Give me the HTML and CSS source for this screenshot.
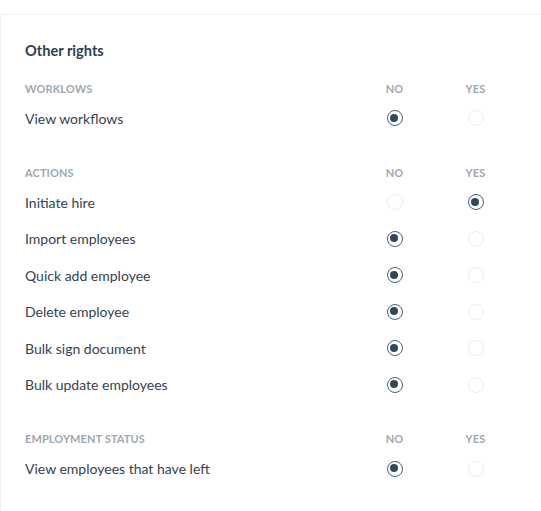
FILE: index.html
```html
<!DOCTYPE html>
<html lang="en">
<head>
  <meta charset="utf-8">
  <title>Other rights</title>
  <link rel="stylesheet" href="styles.css">
</head>
<body>
  <div class="page">
    <div class="card">
      <h2 class="title">Other rights</h2>

      <!-- workflows -->
      <div class="section">
        <div class="row head">
          <span class="label">Worklows</span>
          <span class="col">No</span>
          <span class="col">Yes</span>
        </div>
        <div class="row">
          <span class="label">View workflows</span>
          <span class="col"><span class="radio on"></span></span>
          <span class="col"><span class="radio"></span></span>
        </div>
      </div>

      <!-- actions -->
      <div class="section">
        <div class="row head">
          <span class="label">Actions</span>
          <span class="col">No</span>
          <span class="col">Yes</span>
        </div>
        <div class="row">
          <span class="label">Initiate hire</span>
          <span class="col"><span class="radio"></span></span>
          <span class="col"><span class="radio on"></span></span>
        </div>
        <div class="row">
          <span class="label">Import employees</span>
          <span class="col"><span class="radio on"></span></span>
          <span class="col"><span class="radio"></span></span>
        </div>
        <div class="row">
          <span class="label">Quick add employee</span>
          <span class="col"><span class="radio on"></span></span>
          <span class="col"><span class="radio"></span></span>
        </div>
        <div class="row">
          <span class="label">Delete employee</span>
          <span class="col"><span class="radio on"></span></span>
          <span class="col"><span class="radio"></span></span>
        </div>
        <div class="row">
          <span class="label">Bulk sign document</span>
          <span class="col"><span class="radio on"></span></span>
          <span class="col"><span class="radio"></span></span>
        </div>
        <div class="row">
          <span class="label">Bulk update employees</span>
          <span class="col"><span class="radio on"></span></span>
          <span class="col"><span class="radio"></span></span>
        </div>
      </div>

      <!-- employment status -->
      <div class="section">
        <div class="row head">
          <span class="label">Employment status</span>
          <span class="col">No</span>
          <span class="col">Yes</span>
        </div>
        <div class="row">
          <span class="label">View employees that have left</span>
          <span class="col"><span class="radio on"></span></span>
          <span class="col"><span class="radio"></span></span>
        </div>
      </div>
    </div>
  </div>
</body>
</html>
```

FILE: styles.css
```css
* { margin: 0; padding: 0; box-sizing: border-box; }
body {
  font-family: Lato, "Open Sans", Arial, sans-serif;
  background: #fff;
  color: #36424f;
}
.page {
  padding-top: 14px;
}
.card {
  border-top: 1px solid #f1f1f1;
  border-left: 1px solid #f1f1f1;
  padding: 26px 25px 40px 24px;
  min-height: 497px;
}
.title {
  font-size: 14.6px;
  line-height: 20px;
  font-weight: 700;
  color: #2f3f50;
  margin-bottom: 15px;
}
.section + .section {
  margin-top: 23.5px;
}
.row {
  display: grid;
  grid-template-columns: 1fr 81px 81px;
  align-items: center;
  height: 36.5px;
  font-size: 14px;
}
.row.head {
  height: 24px;
  font-size: 11px;
  font-weight: 700;
  text-transform: uppercase;
  color: #9ea8b3;
  letter-spacing: 0.1px;
}
.col {
  display: flex;
  justify-content: center;
}
.radio {
  width: 16px;
  height: 16px;
  border-radius: 50%;
  border: 1px solid #eceef1;
  background: #fff;
  display: block;
  position: relative;
}
.radio.on {
  border: 1.5px solid #4a5f77;
}
.radio.on::after {
  content: "";
  position: absolute;
  left: 2.5px;
  top: 2.5px;
  width: 8px;
  height: 8px;
  border-radius: 50%;
  background: #33475b;
}
```
